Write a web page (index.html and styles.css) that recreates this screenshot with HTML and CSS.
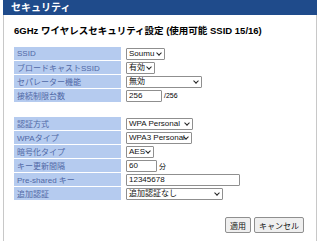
FILE: index.html
```html
<!DOCTYPE html>
<html lang="ja">
<head>
  <meta charset="UTF-8">
  <title>セキュリティ</title>
  <link rel="stylesheet" href="styles.css">
</head>
<body>
  <div class="panel">
    <div class="panel-head">セキュリティ</div>
    <div class="panel-body">
      <h2 class="title">6GHz ワイヤレスセキュリティ設定 (使用可能 SSID 15/16)</h2>

      <table class="form">
        <tr>
          <th>SSID</th>
          <td><span class="sel w-soumu">Soumu<i></i></span></td>
        </tr>
        <tr>
          <th>ブロードキャストSSID</th>
          <td><span class="sel w-yuko">有効<i></i></span></td>
        </tr>
        <tr>
          <th>セパレーター機能</th>
          <td><span class="sel w-muko">無効<i></i></span></td>
        </tr>
        <tr>
          <th>接続制限台数</th>
          <td><span class="txt w-num">256</span><span class="unit">/256</span></td>
        </tr>
      </table>

      <table class="form second">
        <tr>
          <th>認証方式</th>
          <td><span class="sel w-auth">WPA Personal<i></i></span></td>
        </tr>
        <tr>
          <th>WPAタイプ</th>
          <td><span class="sel w-wpa">WPA3 Personal<i></i></span></td>
        </tr>
        <tr>
          <th>暗号化タイプ</th>
          <td><span class="sel w-aes">AES<i></i></span></td>
        </tr>
        <tr>
          <th>キー更新間隔</th>
          <td><span class="txt w-min">60</span><span class="unit">分</span></td>
        </tr>
        <tr>
          <th>Pre-shared キー</th>
          <td><span class="txt w-psk">12345678</span></td>
        </tr>
        <tr>
          <th>追加認証</th>
          <td><span class="sel w-extra">追加認証なし<i></i></span></td>
        </tr>
      </table>

      <div class="actions">
        <button class="btn">適用</button>
        <button class="btn">キャンセル</button>
      </div>
    </div>
  </div>
</body>
</html>
```

FILE: styles.css
```css
body {
  margin: 0;
  font-family: "Liberation Sans", Arial, "Noto Sans CJK JP", sans-serif;
  font-size: 8px;
  color: #000;
  background: #fff;
}

.panel {
  margin: 0 3px;
  height: 241px;
  border-left: 1px solid #c8c8c8;
  border-right: 1px solid #c8c8c8;
  box-sizing: border-box;
}

.panel-head {
  background: #1f4b8b;
  color: #fff;
  font-weight: bold;
  font-size: 10px;
  height: 15px;
  line-height: 15px;
  padding-left: 8px;
  margin: 0 -1px;
}

.panel-body {
  padding: 0 12px 0 10px;
}

.title {
  font-size: 9.5px;
  font-weight: bold;
  margin: 0;
  padding-top: 11px;
  height: 20px;
  line-height: 10px;
}

.form {
  border-collapse: separate;
  border-spacing: 0 1.4px;
}

.form.second {
  margin-top: 13px;
}

.form th {
  width: 104px;
  height: 13px;
  padding: 0 0 0 3px;
  background: #b5cbef;
  color: #5068a6;
  font-weight: normal;
  text-align: left;
  white-space: nowrap;
}

.form td {
  padding: 0 0 0 5px;
  height: 13px;
  white-space: nowrap;
}

.sel,
.txt {
  display: inline-block;
  position: relative;
  vertical-align: middle;
  height: 12px;
  line-height: 10px;
  border: 1px solid #8f8f8f;
  border-radius: 1px;
  padding: 0 2px;
  box-sizing: border-box;
  background: #fff;
  color: #111;
  overflow: hidden;
}

.sel {
  padding-right: 12px;
}

.sel i {
  position: absolute;
  right: 3px;
  top: 2px;
  width: 3px;
  height: 3px;
  border-right: 1.4px solid #222;
  border-bottom: 1.4px solid #222;
  transform: rotate(45deg);
}

.w-soumu { width: 39px; }
.w-yuko { width: 29px; }
.w-muko { width: 76px; }
.w-auth { width: 67px; }
.w-wpa { width: 66px; }
.w-aes { width: 28px; }
.w-extra { width: 97px; }
.w-num { width: 36px; }
.w-min { width: 31px; }
.w-psk { width: 114px; }

.unit {
  vertical-align: middle;
  margin-left: 2px;
  font-size: 7px;
}

.actions {
  display: flex;
  justify-content: flex-end;
  gap: 3px;
  margin-top: 16px;
}

.btn {
  font-family: inherit;
  font-size: 8px;
  height: 16px;
  padding: 0 4px;
  background: #efefef;
  border: 1px solid #8f8f8f;
  border-radius: 2px;
  color: #111;
}
```
